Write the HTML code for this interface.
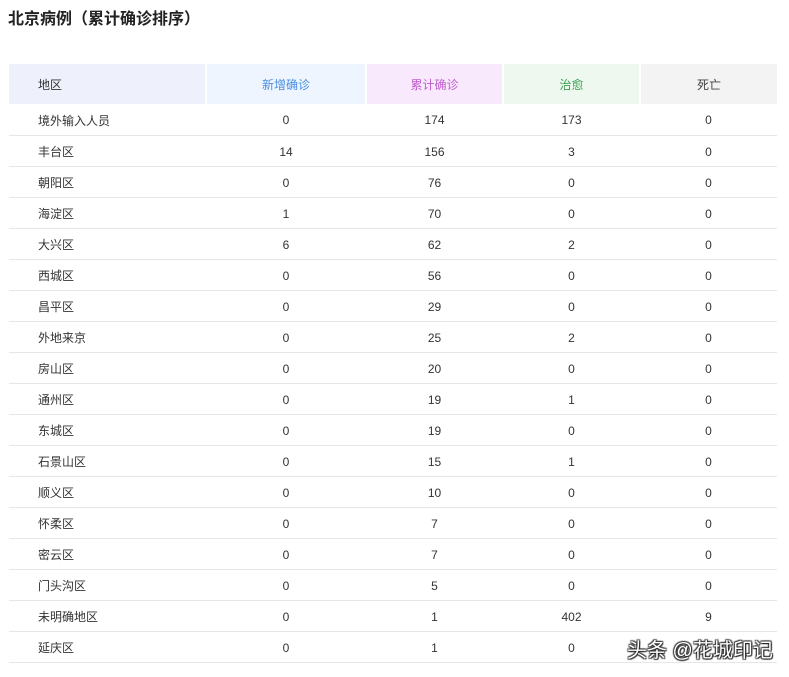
<!DOCTYPE html>
<html><head><meta charset="utf-8"><style>
body{margin:0;background:#fff;width:789px;height:677px;overflow:hidden;font-family:"Liberation Sans","Noto Sans CJK SC",sans-serif;position:relative}
h1{position:absolute;left:8px;top:9px;margin:0;font-size:16px;font-weight:bold;color:#222;line-height:22px}
table{position:absolute;left:9px;top:64px;width:768px;border-collapse:collapse;font-size:12px;color:#333}
th{height:40px;font-weight:normal;padding:0;border-right:2px solid #fff}
th:last-child{border-right:0}
td{height:31px;border-bottom:1px solid #e6e6e6;text-align:center;padding:2px 0 0 0;box-sizing:border-box}
td:first-child,th:first-child{text-align:left;padding-left:29px}
.wm{position:absolute;left:627px;top:634px;font-size:20px;color:#fff;text-shadow:0 0 1px #222,1px 1px 1px #222,-1px -1px 1px #444,1px -1px 1px #444,-1px 1px 1px #444}
</style></head><body>
<h1>北京病例（累计确诊排序）</h1>
<table>
<colgroup><col style="width:197px"><col style="width:160px"><col style="width:137px"><col style="width:137px"><col style="width:137px"></colgroup>
<tr><th style="background:#eef1fb;color:#333">地区</th><th style="background:#eef5fe;color:#4a8ee0">新增确诊</th><th style="background:#f8eafc;color:#c05cd0">累计确诊</th><th style="background:#eef8ef;color:#3f9f55">治愈</th><th style="background:#f3f3f3;color:#444">死亡</th></tr>
<tr><td>境外输入人员</td><td>0</td><td>174</td><td>173</td><td>0</td></tr>
<tr><td>丰台区</td><td>14</td><td>156</td><td>3</td><td>0</td></tr>
<tr><td>朝阳区</td><td>0</td><td>76</td><td>0</td><td>0</td></tr>
<tr><td>海淀区</td><td>1</td><td>70</td><td>0</td><td>0</td></tr>
<tr><td>大兴区</td><td>6</td><td>62</td><td>2</td><td>0</td></tr>
<tr><td>西城区</td><td>0</td><td>56</td><td>0</td><td>0</td></tr>
<tr><td>昌平区</td><td>0</td><td>29</td><td>0</td><td>0</td></tr>
<tr><td>外地来京</td><td>0</td><td>25</td><td>2</td><td>0</td></tr>
<tr><td>房山区</td><td>0</td><td>20</td><td>0</td><td>0</td></tr>
<tr><td>通州区</td><td>0</td><td>19</td><td>1</td><td>0</td></tr>
<tr><td>东城区</td><td>0</td><td>19</td><td>0</td><td>0</td></tr>
<tr><td>石景山区</td><td>0</td><td>15</td><td>1</td><td>0</td></tr>
<tr><td>顺义区</td><td>0</td><td>10</td><td>0</td><td>0</td></tr>
<tr><td>怀柔区</td><td>0</td><td>7</td><td>0</td><td>0</td></tr>
<tr><td>密云区</td><td>0</td><td>7</td><td>0</td><td>0</td></tr>
<tr><td>门头沟区</td><td>0</td><td>5</td><td>0</td><td>0</td></tr>
<tr><td>未明确地区</td><td>0</td><td>1</td><td>402</td><td>9</td></tr>
<tr><td>延庆区</td><td>0</td><td>1</td><td>0</td><td></td></tr>
</table>
<div class="wm">头条 @花城印记</div>
</body></html>
